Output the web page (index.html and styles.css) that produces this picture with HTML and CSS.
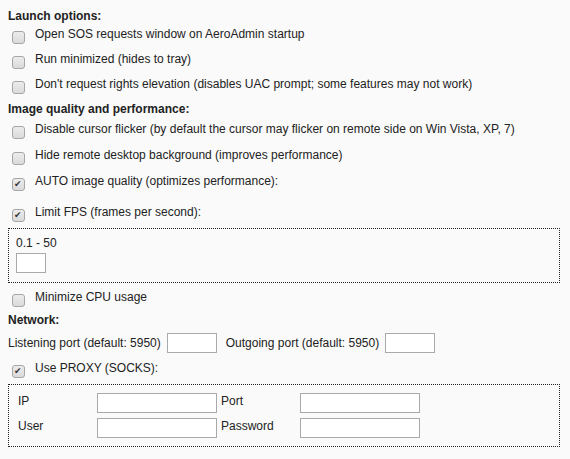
FILE: index.html
```html
<!DOCTYPE html>
<html lang="en">
<head>
    <meta charset="UTF-8">
    <title>AeroAdmin settings</title>
    <link rel="stylesheet" href="styles.css">
</head>
<body>
    <div class="settings">
        <h3 class="section-title">Launch options:</h3>
        <label class="opt first"><input type="checkbox"><span>Open SOS requests window on AeroAdmin startup</span></label>
        <label class="opt"><input type="checkbox"><span>Run minimized (hides to tray)</span></label>
        <label class="opt"><input type="checkbox"><span>Don't request rights elevation (disables UAC prompt; some features may not work)</span></label>

        <h3 class="section-title spaced">Image quality and performance:</h3>
        <label class="opt first-wide"><input type="checkbox"><span>Disable cursor flicker (by default the cursor may flicker on remote side on Win Vista, XP, 7)</span></label>
        <label class="opt wide"><input type="checkbox"><span>Hide remote desktop background (improves performance)</span></label>
        <label class="opt wide"><input type="checkbox" checked><span>AUTO image quality (optimizes performance):</span></label>
        <label class="opt wider"><input type="checkbox" checked><span>Limit FPS (frames per second):</span></label>

        <div class="frame fps-frame">
            <div class="range">0.1 - 50</div>
            <input type="text" class="field small">
        </div>

        <label class="opt after-frame"><input type="checkbox"><span>Minimize CPU usage</span></label>

        <h3 class="section-title net-title">Network:</h3>
        <div class="ports">
            <span>Listening port (default: 5950)</span>
            <input type="text" class="field small">
            <span class="outgoing">Outgoing port (default: 5950)</span>
            <input type="text" class="field small">
        </div>
        <label class="opt after-ports"><input type="checkbox" checked><span>Use PROXY (SOCKS):</span></label>

        <div class="frame proxy-frame">
            <div class="proxy-grid">
                <span>IP</span>
                <input type="text" class="field">
                <span>Port</span>
                <input type="text" class="field">
                <span>User</span>
                <input type="text" class="field">
                <span>Password</span>
                <input type="password" class="field">
            </div>
        </div>
    </div>
</body>
</html>
```

FILE: styles.css
```css
* { box-sizing: border-box; }
body {
    margin: 0;
    padding: 8px 10px 0 8px;
    background: #fafafa;
    color: #222;
    font-family: "Liberation Sans", Arial, sans-serif;
    font-size: 12px;
    line-height: 16px;
}

.section-title {
    margin: 0;
    font-size: 12px;
    font-weight: bold;
    line-height: 16px;
}
.section-title.spaced { margin-top: 9px; }
.section-title.net-title { margin-top: 7px; }

.opt {
    display: flex;
    align-items: flex-start;
    margin-top: 9px;
    line-height: 16px;
}
.opt.first { margin-top: 2px; }
.opt.first-wide { margin-top: 4px; }
.opt.wide { margin-top: 10px; }
.opt.wider { margin-top: 15px; }
.opt.after-frame { margin-top: 6px; }
.opt.after-ports { margin-top: 7px; }

.opt input[type="checkbox"] {
    -webkit-appearance: none;
    appearance: none;
    position: relative;
    flex: none;
    width: 13px;
    height: 13px;
    margin: 5px 10px -2px 4px;
    border: 1px solid #a6a6a6;
    border-radius: 3px;
    background: linear-gradient(#ececec, #dadada);
}
.opt input[type="checkbox"]:checked::after {
    content: "\2714";
    position: absolute;
    left: 1px;
    top: -1px;
    font-family: "DejaVu Sans", sans-serif;
    font-size: 9px;
    line-height: 13px;
    color: #333;
}

.frame {
    border: 1px dotted #222;
}
.fps-frame {
    margin-top: 8px;
    padding: 6px 7px 9px;
}
.range { line-height: 16px; }

.field {
    display: block;
    height: 20px;
    margin: 0;
    padding: 0 3px;
    border: 1px solid #a9a9a9;
    background: #fff;
    font: inherit;
}
.field.small { width: 50px; }
.fps-frame .field.small { width: 30px; margin-top: 2px; }

.ports {
    display: flex;
    align-items: center;
    margin-top: 5px;
    height: 20px;
}
.ports .field { margin-left: 6px; }
.ports .outgoing { margin-left: 9px; }

.proxy-frame {
    margin-top: 8px;
    padding: 8px 9px 8px;
}
.proxy-grid {
    display: grid;
    grid-template-columns: 75px 120px 75px 120px;
    column-gap: 4px;
    row-gap: 5px;
    align-items: center;
}
.proxy-grid .field { width: 120px; }
.proxy-grid span { position: relative; top: -2px; }
```
